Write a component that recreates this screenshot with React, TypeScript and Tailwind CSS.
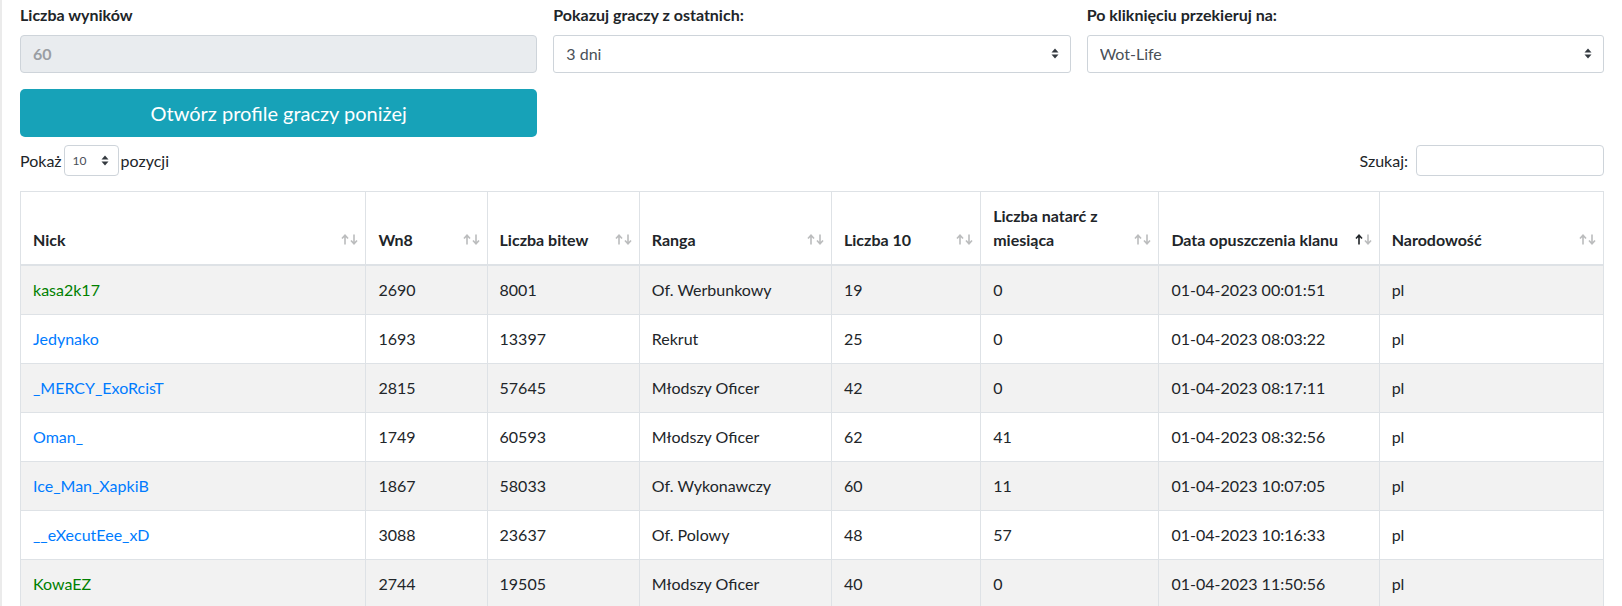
import React from 'react';

type Row = {
  nick: string;
  green?: boolean;
  wn8: string;
  battles: string;
  rank: string;
  tens: string;
  attacks: string;
  left: string;
  nat: string;
};

const rows: Row[] = [
  { nick: 'kasa2k17', green: true, wn8: '2690', battles: '8001', rank: 'Of. Werbunkowy', tens: '19', attacks: '0', left: '01-04-2023 00:01:51', nat: 'pl' },
  { nick: 'Jedynako', wn8: '1693', battles: '13397', rank: 'Rekrut', tens: '25', attacks: '0', left: '01-04-2023 08:03:22', nat: 'pl' },
  { nick: '_MERCY_ExoRcisT', wn8: '2815', battles: '57645', rank: 'Młodszy Oficer', tens: '42', attacks: '0', left: '01-04-2023 08:17:11', nat: 'pl' },
  { nick: 'Oman_', wn8: '1749', battles: '60593', rank: 'Młodszy Oficer', tens: '62', attacks: '41', left: '01-04-2023 08:32:56', nat: 'pl' },
  { nick: 'Ice_Man_XapkiB', wn8: '1867', battles: '58033', rank: 'Of. Wykonawczy', tens: '60', attacks: '11', left: '01-04-2023 10:07:05', nat: 'pl' },
  { nick: '__eXecutEee_xD', wn8: '3088', battles: '23637', rank: 'Of. Polowy', tens: '48', attacks: '57', left: '01-04-2023 10:16:33', nat: 'pl' },
  { nick: 'KowaEZ', green: true, wn8: '2744', battles: '19505', rank: 'Młodszy Oficer', tens: '40', attacks: '0', left: '01-04-2023 11:50:56', nat: 'pl' },
];

const columns = [
  { label: 'Nick', w: 'w-[345px]' },
  { label: 'Wn8', w: 'w-[121px]' },
  { label: 'Liczba bitew', w: 'w-[152px]' },
  { label: 'Ranga', w: 'w-[192px]' },
  { label: 'Liczba 10', w: 'w-[149px]' },
  { label: 'Liczba natarć z|miesiąca', w: 'w-[178px]' },
  { label: 'Data opuszczenia klanu', w: 'w-[220px]', active: true },
  { label: 'Narodowość', w: 'w-[224px]' },
];

const SelectArrows = () => (
  <svg width="8" height="11" viewBox="0 0 8 11" className="text-[#343a40]">
    <path d="M4 0.5 L7.5 4.5 L0.5 4.5 Z" fill="currentColor" />
    <path d="M4 10.5 L7.5 6.5 L0.5 6.5 Z" fill="currentColor" />
  </svg>
);

const SortIcon = ({ active }: { active?: boolean }) => (
  <span className="absolute right-[7px] bottom-[19px] flex gap-[1px]">
    <svg width="8" height="11" viewBox="0 0 8 11" className={active ? 'text-[#212529]' : 'text-[#212529] opacity-30'}>
      <path d="M4 10.5 V1.5 M1 4.5 L4 1.2 L7 4.5" fill="none" stroke="currentColor" strokeWidth="1.6" />
    </svg>
    <svg width="8" height="11" viewBox="0 0 8 11" className="text-[#212529] opacity-30">
      <path d="M4 0.5 V9.5 M1 6.5 L4 9.8 L7 6.5" fill="none" stroke="currentColor" strokeWidth="1.6" />
    </svg>
  </span>
);

export default function App() {
  return (
    <div className="h-screen overflow-hidden bg-white border-l-2 border-[#ebebeb] font-['Lato',sans-serif] text-base text-[#212529]">
      <div className="px-[18px] pt-[3px]">
        <div className="grid grid-cols-3 gap-4">
          <div>
            <label className="block font-bold leading-6 mb-2">Liczba wyników</label>
            <div className="h-[38px] flex items-center px-3 bg-[#e9ecef] border border-[#ced4da] rounded-[4px] font-bold text-[#9a9ea3]">
              60
            </div>
            <button className="mt-4 w-full h-12 rounded-[5px] bg-[#17a2b8] text-white text-xl">
              Otwórz profile graczy poniżej
            </button>
          </div>
          <div>
            <label className="block font-bold leading-6 mb-2">Pokazuj graczy z ostatnich:</label>
            <div className="relative">
              <select className="appearance-none w-full h-[38px] px-3 bg-white border border-[#ced4da] rounded-[3px] text-[#495057] outline-none">
                <option>3 dni</option>
              </select>
              <span className="absolute right-3 top-[13px] pointer-events-none"><SelectArrows /></span>
            </div>
          </div>
          <div>
            <label className="block font-bold leading-6 mb-2">Po kliknięciu przekieruj na:</label>
            <div className="relative">
              <select className="appearance-none w-full h-[38px] px-3 bg-white border border-[#ced4da] rounded-[3px] text-[#495057] outline-none">
                <option>Wot-Life</option>
              </select>
              <span className="absolute right-3 top-[13px] pointer-events-none"><SelectArrows /></span>
            </div>
          </div>
        </div>

        <div className="mt-2 flex items-center justify-between">
          <div className="flex items-center gap-[2px]">
            <span>Pokaż</span>
            <div className="relative">
              <select className="appearance-none w-[55px] h-[31px] pl-2 bg-white border border-[#ced4da] rounded-[4px] text-xs text-[#495057] outline-none">
                <option>10</option>
              </select>
              <span className="absolute right-[10px] top-[10px] pointer-events-none"><SelectArrows /></span>
            </div>
            <span>pozycji</span>
          </div>
          <div className="flex items-center gap-2">
            <span>Szukaj:</span>
            <input className="w-[188px] h-[31px] border border-[#ced4da] rounded-[4px] outline-none px-2" />
          </div>
        </div>

        <table className="mt-[15px] w-full table-fixed border-collapse border border-[#dee2e6]">
          <thead>
            <tr>
              {columns.map(c => (
                <th
                  key={c.label}
                  className={`${c.w} relative align-bottom text-left font-bold leading-6 pl-3 pr-[30px] py-3 border border-[#dee2e6] border-b-2 whitespace-nowrap`}
                >
                  {c.label.split('|').map((part, i) => (
                    <div key={i}>{part}</div>
                  ))}
                  <SortIcon active={c.active} />
                </th>
              ))}
            </tr>
          </thead>
          <tbody>
            {rows.map((r, i) => (
              <tr key={r.nick} className={i % 2 === 0 ? 'bg-[#f2f2f2]' : 'bg-white'}>
                <td className="p-3 leading-6 border border-[#dee2e6]">
                  <a className={r.green ? 'text-[#008000]' : 'text-[#007bff]'}>{r.nick}</a>
                </td>
                <td className="p-3 leading-6 border border-[#dee2e6]">{r.wn8}</td>
                <td className="p-3 leading-6 border border-[#dee2e6]">{r.battles}</td>
                <td className="p-3 leading-6 border border-[#dee2e6]">{r.rank}</td>
                <td className="p-3 leading-6 border border-[#dee2e6]">{r.tens}</td>
                <td className="p-3 leading-6 border border-[#dee2e6]">{r.attacks}</td>
                <td className="p-3 leading-6 border border-[#dee2e6]">{r.left}</td>
                <td className="p-3 leading-6 border border-[#dee2e6]">{r.nat}</td>
              </tr>
            ))}
          </tbody>
        </table>
      </div>
    </div>
  );
}
